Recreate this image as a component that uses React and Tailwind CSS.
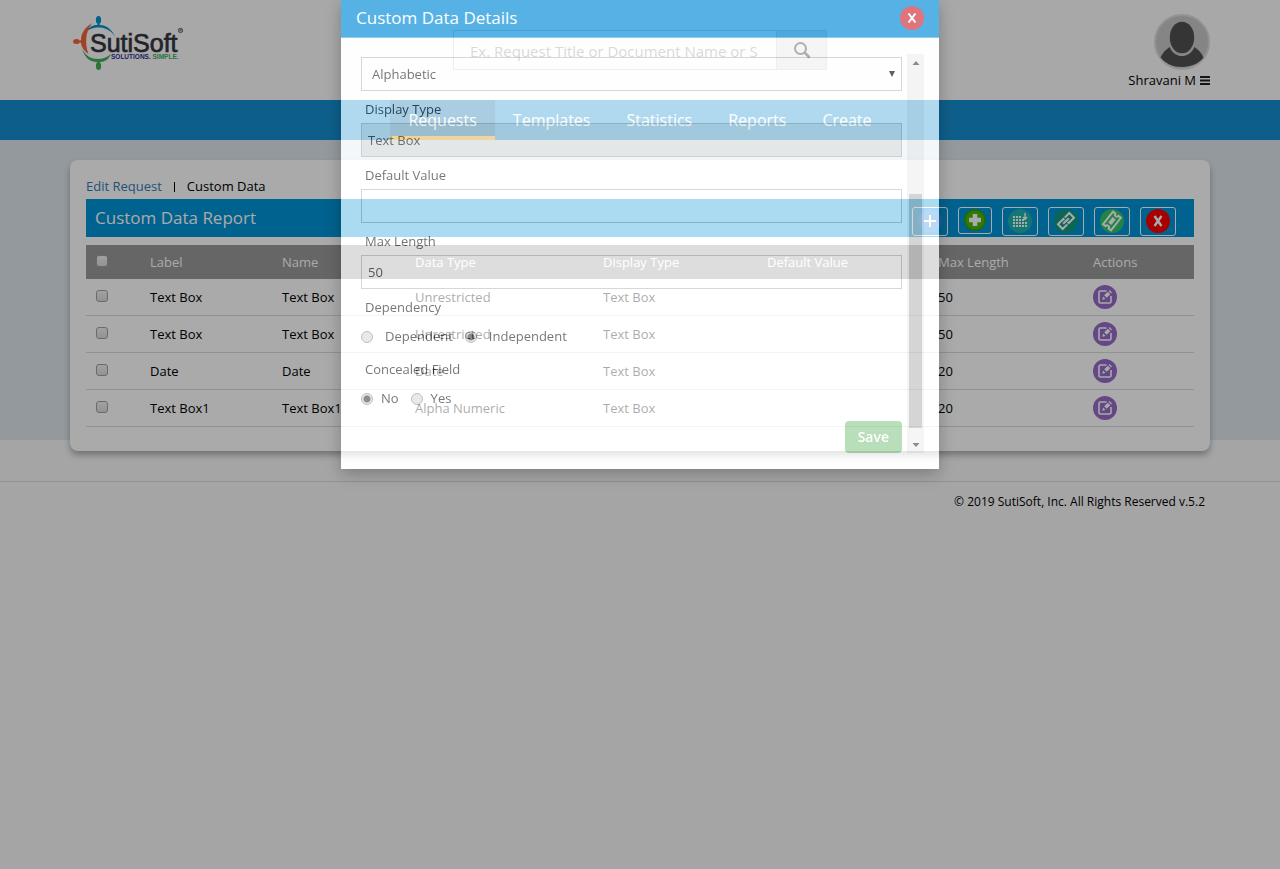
import React from "react";

const navItems = ["Requests", "Templates", "Statistics", "Reports", "Create"];

const rows = [
  { label: "Text Box", name: "Text Box", data: "Unrestricted", display: "Text Box", max: "50" },
  { label: "Text Box", name: "Text Box", data: "Unrestricted", display: "Text Box", max: "50" },
  { label: "Date", name: "Date", data: "Date", display: "Text Box", max: "20" },
  { label: "Text Box1", name: "Text Box1", data: "Alpha Numeric", display: "Text Box", max: "20" },
];

function Logo() {
  return (
    <svg width="114" height="58" viewBox="0 0 114 58" role="img" aria-label="SutiSoft" className="block">
      <ellipse cx="26.500" cy="6" rx="2.600" ry="4" fill="#0091d0" />
      <path d="M14 18C18 12 21 11 25 11l1.500-2 1.500 2c7 0 12 5 15.500 12-5-7-10-9.500-17-9.500-5 0-8 1-12.500 4.500z" fill="#0091d0" />
      <ellipse cx="4.500" cy="27.500" rx="3.400" ry="2.500" fill="#f0643c" />
      <path d="M20 9C12 14 9 20 9 26l-2 1.500L9 29c0 3 3 8 7.500 11C12.500 29 13.500 18 20 9z" fill="#f0643c" />
      <ellipse cx="26.500" cy="52" rx="2.600" ry="4" fill="#3fae5b" />
      <path d="M10 35c4 7 9 10 16 10 5 0 9-1.500 13-5-2 5-6 8-11 8L26.500 49.500 25 48c-7 0-12-4-15-13z" fill="#3fae5b" />
      <text x="18" y="38" fontSize="25" fill="#35353f" stroke="#35353f" strokeWidth="0.700" fontFamily="'Liberation Sans',Arial,sans-serif">SutiSoft</text>
      <text x="39" y="44.500" fontSize="6.500" fontWeight="700" fill="#2c3192" fontFamily="'Liberation Sans',Arial,sans-serif">SOLUTIONS. <tspan fill="#3fae5b">SIMPLE.</tspan></text>
      <circle cx="108.500" cy="16.500" r="2.200" fill="none" stroke="#35353f" strokeWidth=".7" />
      <path d="M107.800 17.800v-2.600h1.100a.7.700 0 0 1 0 1.400h-1.100m1 0l.8 1.200" fill="none" stroke="#35353f" strokeWidth=".5" />
    </svg>
  );
}

function Avatar() {
  return (
    <svg width="56" height="56" viewBox="0 0 56 56" aria-hidden="true" className="block">
      <circle cx="28" cy="28" r="27" fill="#c8c8c8" stroke="#dcdcdc" strokeWidth="2" />
      <ellipse cx="28" cy="23.500" rx="12.200" ry="15.800" fill="#505050" />
      <path d="M15.500 33C11 36 8 40 6.500 43.500 12 50 19 53 28 53s17-3.500 21.500-9.500C48 40 45 36 40.500 33c-3 6.500-7.500 9-12.500 9s-9.500-2.500-12.500-9z" fill="#505050" />
    </svg>
  );
}

const tools = [
  {
    label: "Add",
    icon: (
      <svg width="24" height="24" viewBox="0 0 24 24">
        <circle cx="12" cy="12" r="12" fill="#2a8fe6" />
        <path d="M6 12h12M12 6v12" stroke="#fff" strokeWidth="2" />
      </svg>
    ),
  },
  {
    label: "Add new",
    icon: (
      <svg width="22" height="22" viewBox="0 0 22 22">
        <circle cx="11" cy="11" r="11" fill="#2f9d12" />
        <circle cx="11" cy="11" r="9.500" fill="#4bb40e" />
        <path d="M5 11h12M11 5v12" stroke="#fff" strokeWidth="4.500" />
      </svg>
    ),
  },
  {
    label: "Import",
    icon: (
      <svg width="24" height="24" viewBox="0 0 24 24">
        <circle cx="12" cy="12" r="12" fill="#1fb5ac" />
        <path
          d="M5 8h8M5 11h11M5 14h14M5 17h14"
          stroke="#fff" strokeWidth="2" strokeDasharray="2 1"
        />
        <path d="M17 4v6M15 8l2 2.500L19 8" fill="none" stroke="#fff" strokeWidth="1.400" />
      </svg>
    ),
  },
  {
    label: "Link",
    icon: (
      <svg width="24" height="24" viewBox="0 0 24 24">
        <circle cx="12" cy="12" r="12" fill="#109a80" />
        <g transform="rotate(-45 12 12)" fill="none" stroke="#fff" strokeWidth="2">
          <path d="M10.500 15.300H4V8.700h7.500v1.500" />
          <path d="M13.500 8.700H20v6.600h-7.500v-1.500" />
          <path d="M8 12h8" />
        </g>
      </svg>
    ),
  },
  {
    label: "Tickets",
    icon: (
      <svg width="24" height="24" viewBox="0 0 24 24">
        <circle cx="12" cy="12" r="12" fill="#33c56d" />
        <g transform="rotate(-52 12 12)" fill="none" stroke="#fff" strokeWidth="2">
          <path d="M4 7h16v3a2 2 0 0 0 0 4v3H4v-3a2 2 0 0 0 0-4z" />
          <path d="M8.500 10h7v4h-7z" fill="#fff" stroke="none" />
        </g>
      </svg>
    ),
  },
  {
    label: "Close",
    icon: (
      <svg width="24" height="24" viewBox="0 0 24 24">
        <circle cx="12" cy="12" r="12" fill="#fb0000" />
        <path d="M8.500 7l7 10M15.500 7l-7 10" stroke="#fff" strokeWidth="2.400" />
      </svg>
    ),
  },
];

function EditIcon() {
  return (
    <svg width="24" height="24" viewBox="0 0 24 24" className="block">
      <circle cx="12" cy="12" r="12" fill="#966bc8" />
      <path d="M13.500 6H7.500A1.500 1.500 0 0 0 6 7.500v9A1.500 1.500 0 0 0 7.500 18h9a1.500 1.500 0 0 0 1.500-1.500V11" fill="none" stroke="#fff" strokeWidth="1.600" />
      <path d="M9.300 14.700l.8-3.200 2.400 2.400zM11.200 10.300l3.600-3.600 2.500 2.500-3.600 3.600zM15.600 5.900l.9-.9 2.500 2.500-.9.900z" fill="#fff" />
    </svg>
  );
}

function Check({ label }) {
  return (
    <input
      type="checkbox"
      aria-label={label}
      className="block size-3 appearance-none rounded-[3px] border border-[#a0a0a0] bg-linear-to-b from-[#f2f2f2] to-[#dcdcdc] checked:bg-sky-600"
    />
  );
}

function Radio({ id, name, label, defaultChecked, gap }) {
  return (
    <div className={"flex items-center " + gap}>
      <input
        id={id}
        type="radio"
        name={name}
        defaultChecked={defaultChecked}
        className="size-3 appearance-none rounded-full border border-[#a0a0a0] bg-[#dedede] checked:bg-[radial-gradient(circle,#555_3px,#dedede_4px)]"
      />
      <label htmlFor={id}>{label}</label>
    </div>
  );
}

function FieldLabel({ htmlFor, children }) {
  return (
    <label htmlFor={htmlFor} className="block h-8 px-1 pt-2 leading-5">
      {children}
    </label>
  );
}

const field = "block h-[34px] w-full border border-[#c4c4c4] px-1.5";

function Modal() {
  return (
    <div
      role="dialog"
      aria-label="Custom Data Details"
      className="fixed top-0 left-1/2 w-[598px] -translate-x-1/2 bg-white text-[13px] text-[#333] opacity-67 shadow-[0_5px_15px_rgba(0,0,0,0.5),0_0_0_9999px_rgba(0,0,0,0.5)]"
    >
      <div className="flex h-[38px] items-center justify-between border-b border-[#5ab4e4] bg-[#048dda] px-[15px] pb-0.5 text-white">
        <h2 className="text-[17px] font-medium">Custom Data Details</h2>
        <button type="button" aria-label="Close dialog" className="flex size-6 items-center justify-center rounded-full bg-[#d0303c]">
          <svg width="10" height="10" viewBox="0 0 10 10">
            <path d="M1.500 .5l7 9M8.500 .5l-7 9" stroke="#fff" strokeWidth="2" />
          </svg>
        </button>
      </div>
      <div className="flex gap-[5px] pt-4 pr-[15px] pb-4 pl-5">
        <form className="flex-1 pt-[3px]" onSubmit={(e) => e.preventDefault()}>
          <div className="relative">
            <select aria-label="Data Type" className="block h-[34px] w-full appearance-none border border-[#c4c4c4] bg-white px-2.5 pt-0.5">
              <option>Alphabetic</option>
            </select>
            <svg width="6" height="6" viewBox="0 0 6 6" className="pointer-events-none absolute top-[14px] right-[7px]">
              <path d="M0 0h6L3 6z" fill="#111" />
            </svg>
          </div>
          <FieldLabel htmlFor="display-type">Display Type</FieldLabel>
          <input id="display-type" defaultValue="Text Box" readOnly className={field + " bg-[#e8e7e4]"} />
          <FieldLabel htmlFor="default-value">Default Value</FieldLabel>
          <input id="default-value" className={field} />
          <FieldLabel htmlFor="max-length">Max Length</FieldLabel>
          <input id="max-length" defaultValue="50" className={field} />
          <fieldset>
            <legend className="block h-8 px-1 pt-2 leading-5">Dependency</legend>
            <div className="flex h-[30px] items-center gap-3 pt-0.5">
              <Radio id="dependent" name="dependency" label="Dependent" gap="gap-3" />
              <Radio id="independent" name="dependency" label="Independent" gap="gap-3" defaultChecked />
            </div>
          </fieldset>
          <fieldset>
            <legend className="block h-8 px-1 pt-2 leading-5">Concealed Field</legend>
            <div className="flex h-[30px] items-center gap-3 pt-0.5">
              <Radio id="concealed-no" name="concealed" label="No" gap="gap-2" defaultChecked />
              <Radio id="concealed-yes" name="concealed" label="Yes" gap="gap-2" />
            </div>
          </fieldset>
          <div className="flex justify-end pt-2">
            <button type="submit" className="h-8 rounded-[4px] bg-[#97cf98] px-[13px] pb-0.5 text-[14px] font-semibold text-white">
              Save
            </button>
          </div>
        </form>
        <div className="flex w-[17px] flex-col items-center justify-between bg-[#f1f1f1]" aria-hidden="true">
          <svg width="8" height="16" viewBox="0 0 8 16">
            <path d="M.5 11L4 7l3.500 4z" fill="#505050" />
          </svg>
          <div className="mt-auto h-[234px] w-[13px] bg-[#c1c1c1]" />
          <svg width="8" height="25" viewBox="0 0 8 25">
            <path d="M.5 15L4 19l3.500-4z" fill="#505050" />
          </svg>
        </div>
      </div>
    </div>
  );
}

export default function App() {
  return (
    <div className="min-h-screen bg-[#f8f8f8] font-['Open_Sans','Noto_Sans',sans-serif] text-[13px] text-black">
      <header className="bg-[#fcfcfc]">
        <div className="mx-auto grid h-[100px] max-w-[1140px] grid-cols-[1fr_374px_1fr]">
          <a href="#home" className="pt-3.5 pl-0.5">
            <Logo />
          </a>
          <form className="flex h-10 self-center border border-[#d0d0d0]" onSubmit={(e) => e.preventDefault()}>
            <input
              aria-label="Search"
              placeholder="Ex. Request Title or Document Name or S"
              className="min-w-0 flex-1 px-4 pt-0.5 text-[15px] placeholder:text-[#8c8c8c]"
            />
            <button type="submit" aria-label="Search" className="flex w-[50px] items-center justify-center border-l border-[#d0d0d0] bg-[#e2e2e2]">
              <svg width="18" height="18" viewBox="0 0 18 18">
                <circle cx="7.500" cy="7.500" r="5.500" fill="none" stroke="#111" strokeWidth="2" />
                <path d="M11.500 11.500l5 5" stroke="#111" strokeWidth="2.600" />
              </svg>
            </button>
          </form>
          <div className="flex flex-col items-end pt-3.5">
            <Avatar />
            <button type="button" className="flex items-center gap-1 leading-5">
              Shravani M
              <svg width="10" height="9" viewBox="0 0 10 9">
                <path d="M0 1h10M0 4.500h10M0 8h10" stroke="#222" strokeWidth="2" />
              </svg>
            </button>
          </div>
        </div>
      </header>

      <nav className="flex justify-center bg-[#148ed0] text-[16px] text-white">
        {navItems.map((item, i) => (
          <a
            key={item}
            href={"#" + item.toLowerCase()}
            className={
              "flex h-10 items-center px-[18px] " +
              (i === 0 ? "bg-[#006ba9] shadow-[inset_0_-4px_0_#ffae18]" : "")
            }
          >
            {item}
          </a>
        ))}
      </nav>

      <main className="bg-[linear-gradient(#dde6ec_300px,#f8f8f8_300px)] pt-5 pb-[30px]">
        <section className="mx-auto max-w-[1140px] rounded-lg bg-white px-4 pt-4 pb-6 shadow-[0_4px_6px_rgba(0,0,0,0.3)]">
          <div className="flex h-[23px] items-center gap-3 pb-0.5">
            <a href="#edit" className="text-[#337ab7]">Edit Request</a>
            <span className="h-2.5 w-px bg-black" />
            <span>Custom Data</span>
          </div>
          <div className="flex h-[38px] items-start justify-between bg-[#0093d6] pr-[18px] pl-[9px]">
            <h1 className="self-center text-[17px] text-white">Custom Data Report</h1>
            <div className="flex items-start gap-2.5 pt-2">
              {tools.map((t) => (
                <button key={t.label} type="button" aria-label={t.label} className="rounded-[3px] border border-white px-[5px] pt-px pb-[2px]">
                  {t.icon}
                </button>
              ))}
            </div>
          </div>
          <table className="mt-2 w-full table-fixed border-separate border-spacing-0 text-left">
            <colgroup>
              <col className="w-16" />
              <col className="w-[132px]" />
              <col className="w-[133px]" />
              <col className="w-[188px]" />
              <col className="w-[164px]" />
              <col className="w-[171px]" />
              <col className="w-[155px]" />
              <col />
            </colgroup>
            <thead>
              <tr className="h-[34px] bg-[#999] text-white">
                <th className="p-0 pb-0.5 pl-2.5"><Check label="Select all" /></th>
                {["Label", "Name", "Data Type", "Display Type", "Default Value", "Max Length", "Actions"].map((h) => (
                  <th key={h} className="p-0 pt-0.5 font-normal">{h}</th>
                ))}
              </tr>
            </thead>
            <tbody>
              {rows.map((r, i) => (
                <tr key={i} className="h-[37px] *:border-b *:border-[#dadada]">
                  <td className="p-0 pb-0.5 pl-2.5"><Check label={"Select row " + (i + 1)} /></td>
                  <td className="p-0 pt-0.5">{r.label}</td>
                  <td className="p-0 pt-0.5">{r.name}</td>
                  <td className="p-0 pt-0.5">{r.data}</td>
                  <td className="p-0 pt-0.5">{r.display}</td>
                  <td className="p-0" />
                  <td className="p-0 pt-0.5">{r.max}</td>
                  <td className="p-0">
                    <button type="button" aria-label={"Edit row " + (i + 1)} className="block">
                      <EditIcon />
                    </button>
                  </td>
                </tr>
              ))}
            </tbody>
          </table>
        </section>
      </main>

      <footer className="border-t border-[#dadada]">
        <p className="mx-auto max-w-[1140px] pt-2.5 pr-[5px] text-right text-[12px] leading-5">
          © 2019 SutiSoft, Inc. All Rights Reserved v.5.2
        </p>
      </footer>

      <Modal />
    </div>
  );
}
